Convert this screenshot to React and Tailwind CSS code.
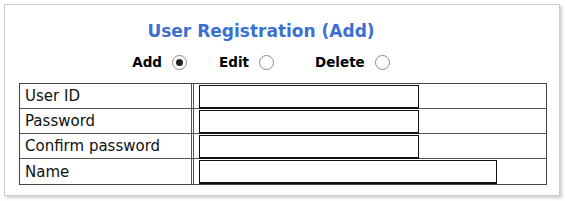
import React, { useState } from 'react';

const font = { fontFamily: '"DejaVu Sans", Verdana, sans-serif' };

const Radio = ({ label, checked, onChange, className = '' }) => (
    <label className={`flex items-center gap-[10px] cursor-pointer ${className}`} onClick={onChange}>
        <span className="text-[13.5px] font-bold text-black">{label}</span>
        <span className="w-[15px] h-[15px] rounded-full border border-[#8a8a8a] bg-white flex items-center justify-center">
            {checked && <span className="w-[7px] h-[7px] rounded-full bg-[#222]" />}
        </span>
    </label>
);

const FormRow = ({ label, inputWidth, last }) => (
    <div className={`flex h-[25px] ${last ? '' : 'border-b border-[#555]'}`}>
        <div className="w-[174px] pl-[5px] flex items-center text-[15px] text-[#111] border-r-[3px] border-double border-[#555]">
            {label}
        </div>
        <div className="flex-1 pl-[5px]">
            <input
                className={`${inputWidth} h-[24px] border-t border-x border-b-2 border-[#111] outline-none px-1 text-[13px]`}
            />
        </div>
    </div>
);

export default function App() {
    const [mode, setMode] = useState('Add');

    return (
        <div className="p-[4px] bg-white w-[565px] h-[201px]" style={font}>
            <div className="w-[556px] h-[192px] border border-[#c8cbd8] bg-white shadow-[2px_2px_3px_rgba(0,0,0,0.2)]">
                <div className="pr-[42px] text-center pt-[16px]">
                    <h1 className="text-[17px] leading-[20px] font-bold text-[#3d6fd1]">User Registration ({mode})</h1>
                    <div className="flex justify-center mt-[11px]">
                        <Radio label="Add" checked={mode === 'Add'} onChange={() => setMode('Add')} />
                        <Radio label="Edit" className="ml-[32px]" checked={mode === 'Edit'} onChange={() => setMode('Edit')} />
                        <Radio label="Delete" className="ml-[41px]" checked={mode === 'Delete'} onChange={() => setMode('Delete')} />
                    </div>
                </div>
                <div className="ml-[14px] mt-[11px] w-[528px] border border-[#444]">
                    <FormRow label="User ID" inputWidth="w-[220px]" />
                    <FormRow label="Password" inputWidth="w-[220px]" />
                    <FormRow label="Confirm password" inputWidth="w-[220px]" />
                    <FormRow label="Name" inputWidth="w-[298px]" last />
                </div>
            </div>
        </div>
    );
}
